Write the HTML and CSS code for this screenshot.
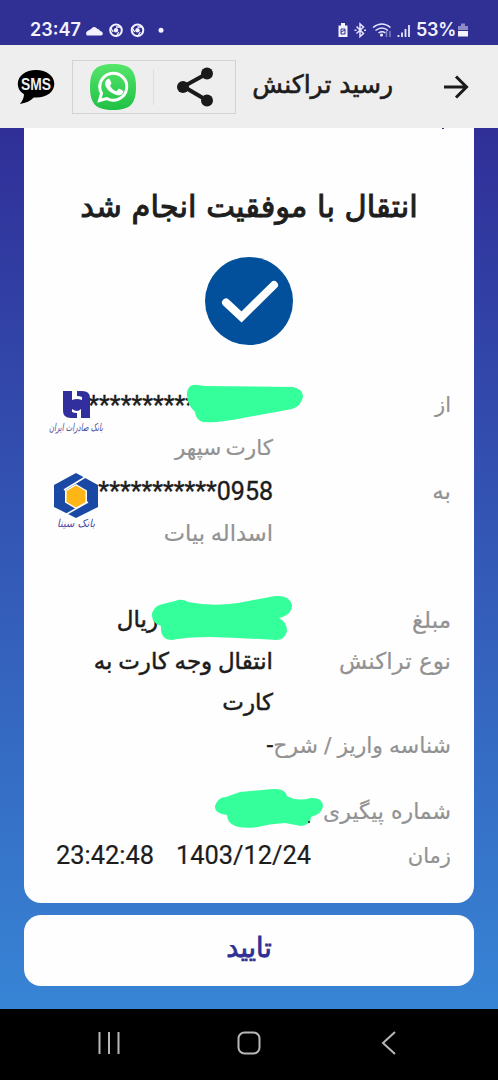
FILE: index.html
```html
<!DOCTYPE html>
<html lang="fa">
<head>
<meta charset="utf-8">
<title>رسید تراکنش</title>
<link rel="stylesheet" href="styles.css">
</head>
<body>
<div class="phone">
  <div class="status">
    <span class="clock">23:47</span>
    <svg class="status-left" width="82" height="18" viewBox="0 0 82 18">
      <path class="fill" d="M2 14.500a2.800 2.800 0 0 1 .5-4.500Q4.500 9 6 8q3-4 6.500 0 2 .2 2.500 2 2 .3 2.500 1.500 1 2-1 3z"/>
      <g class="chrome"><circle cx="31" cy="9.300" r="5.800"/><circle class="fill" cx="31" cy="9.300" r="2.200"/><path d="M31 6h5.500M28.200 11l-3-5M33.800 11l-3 5"/></g>
      <g class="chrome"><circle cx="52.500" cy="9.300" r="5.800"/><circle class="fill" cx="52.500" cy="9.300" r="2.200"/><path d="M52.500 6H58M49.700 11l-3-5M55.300 11l-3 5"/></g>
      <circle class="fill" cx="76" cy="9.300" r="2.500"/>
    </svg>
    <svg class="status-right" width="76" height="18" viewBox="0 0 76 18">
      <path class="fill" d="M1.500 4.500h2.500V2h4v2.500h2.500V16h-9z"/><path class="cut" d="M4 8h4v5H4zM4 11l4-2"/>
      <path class="line" d="M19.500 5.500l7 7-3.500 3V3l3.500 3-7 6.500M17.500 9.200h2M27 9.200h2"/>
      <path class="line" d="M36 6.500q9-7 17.500 0M38.500 9.500q6.500-5 12.500 0M41.500 12q3.500-2.500 7 0"/><circle class="fill" cx="44.500" cy="14" r="1.500"/><path class="dim" d="M49.500 10v6M53 16v-6"/>
      <path class="bars" d="M61.500 14v2M65 11.500V16M68.500 8v8M72 4v12"/>
    </svg>
    <span class="percent">53%</span>
    <svg class="battery" width="12" height="18" viewBox="0 0 12 18"><path class="battery-empty" d="M1 9V5h3V2.500h4V5h3v4z"/><path class="fill" d="M1 10h10v5.500H1z"/></svg>
  </div>

  <header class="bar">
    <svg class="sms" width="38" height="36" viewBox="0 0 38 36"><path d="M19 1C8.500 1 .8 6.800.8 14.800c0 4.700 2.500 8.200 6.200 10.400 0 4-1.800 7-4.200 9.800 6-1 11-3 14-6.500C28.500 29.500 37.300 23.500 37.300 14.800 37.300 6.800 29.500 1 19 1z"/><text x="19" y="20.500" textLength="30" lengthAdjust="spacingAndGlyphs">SMS</text></svg>
    <div class="share-box">
      <svg width="46" height="46" viewBox="0 0 46 46">
        <defs><linearGradient id="wa" x2="0" y2="1"><stop stop-color="#55e66b"/><stop offset="1" stop-color="#20c044"/></linearGradient></defs>
        <path fill="url(#wa)" d="M23 0C40 0 46 6 46 23S40 46 23 46 0 40 0 23 6 0 23 0z"/>
        <path class="wa-ring" d="M9.500 36.500l2-7.200a13.500 13.500 0 1 1 5.200 5.200z"/>
        <path fill="#fff" d="M17 15.500c1-1 2.500-1 3 .2l1.300 3c.3.800-.1 1.500-1.300 2.800 1.500 3 3.500 4.800 6.500 5.800l1.700-2c.5-.6 1-.6 1.600-.3l2.900 1.400c.8.400.7 1 .4 2-1 2.500-4 3.500-6.500 2.600-6-1.800-9.500-5.300-11.200-9.500-.9-2.500-.1-4.500 1.600-6z"/>
      </svg>
      <i class="divider"></i>
      <svg class="share" width="38" height="40" viewBox="0 0 38 40"><path d="M32 6L7.500 19.500 32 34"/><circle cx="31" cy="6.500" r="6"/><circle cx="7" cy="20" r="6"/><circle cx="31" cy="33.500" r="6"/></svg>
    </div>
    <h1 class="bar-title" dir="rtl">رسید تراکنش</h1>
    <svg class="arrow" width="26" height="26" viewBox="0 0 26 26"><path d="M1 13h22M13 2.500L23.500 13 13 23.500"/></svg>
  </header>

  <main class="page">
    <section class="receipt" dir="rtl">
      <i class="scrolled-mark"></i>
      <h2 class="headline">انتقال با موفقیت انجام شد</h2>
      <svg class="done" width="88" height="88" viewBox="0 0 88 88"><circle cx="44" cy="44" r="44"/><path d="M21 45.500L36.500 60 69 28"/></svg>

      <div class="rows">
        <div class="row"><span class="label short">از</span><span class="value card masked" dir="ltr">**********</span>
          <svg class="logo saderat" width="58" height="50" viewBox="0 0 58 50"><rect x="15" y="1" width="28" height="28" fill="#fff"/><path fill="#302f9d" d="M16 2h9v9q3-1 5-1t5 1V8q-2-1-5-1V2h5q8 0 8 7v20h-9v-9q-2 2-4 2t-5-2v3q2 1 5 1v5h-6q-8 0-8-7z"/><text x="29" y="42" direction="rtl" textLength="54" lengthAdjust="spacingAndGlyphs">بانک صادرات ایران</text></svg>
          <svg class="scribble scribble-card" width="120" height="40" viewBox="0 0 120 40"><path d="M2 9Q4 0 13 2L20 3 108 4Q118 6 118 14 116 23 107 26L58 35Q35 40 18 39 11 37 10 29 1 21 2 9z"/></svg>
        </div>
        <div class="row"><span class="label"></span><span class="value muted card-name">کارت سپهر</span></div>
        <div class="row"><span class="label">به</span><span class="value card" dir="ltr">***********0958</span>
          <svg class="logo sina" width="50" height="60" viewBox="0 0 50 60"><path fill="#1949a5" d="M24 1l22 12v22L24 46 2 35V13z"/><path class="sina-lines" d="M12 18L35 4M13 43l23-13"/><path fill="#fff" d="M24 12l11 6.500v12L24 37l-11-6.500v-12z"/><path fill="#feb616" d="M24 13.500l9.500 5.500v11L24 35.500 14.500 30V19z"/><text x="24" y="55" direction="rtl" textLength="38" lengthAdjust="spacingAndGlyphs">بانک سینا</text></svg>
        </div>
        <div class="row"><span class="label"></span><span class="value muted holder">اسداله بیات</span></div>
        <div class="row amount"><span class="label">مبلغ</span><span class="value currency">ریال</span>
          <svg class="scribble scribble-amount" width="146" height="46" viewBox="0 0 146 46"><path d="M2 18Q5 10 13 9L25 6Q32 3 38 7 63 12 88 8L125 1Q140 0 142 10 142 20 129 23 137 27 137 36 135 45 126 45 90 43 60 42 35 42 22 45 10 45 11 31 1 28 2 18z"/></svg>
        </div>
        <div class="row kind"><span class="label">نوع تراکنش</span><span class="value kind-text">انتقال وجه کارت به کارت</span></div>
        <div class="row note"><span class="label note-label">شناسه واریز / شرح</span><span class="value">-</span></div>
        <div class="row tracking"><span class="label tracking-label">شماره پیگیری</span><span class="value"></span>
          <svg class="scribble scribble-tracking" width="112" height="44" viewBox="0 0 112 44"><path d="M2 18Q5 9 13 9L27 4 60 1Q72 0 74 8 84 14 98 10 109 9 110 18 109 26 98 29 98 37 88 38L72 35Q55 36 45 39 15 43 14 27 1 26 2 18z"/><circle class="digit-edge" cx="96" cy="34" r="1.200"/></svg>
        </div>
        <div class="row"><span class="label short">زمان</span><span class="value time" dir="ltr"><span>23:42:48</span><span>1403/12/24</span></span></div>
      </div>
    </section>
    <button class="confirm" dir="rtl">تایید</button>
  </main>

  <nav class="nav">
    <svg width="24" height="24" viewBox="0 0 24 24"><path d="M2.500 1v22M12 1v22M21.500 1v22"/></svg>
    <svg width="24" height="24" viewBox="0 0 24 24"><rect x="1.500" y="1.500" width="21" height="21" rx="6"/></svg>
    <svg width="24" height="24" viewBox="0 0 24 24"><path d="M18 1L6 12l12 11"/></svg>
  </nav>
</div>
</body>
</html>
```
FILE: styles.css
```css
* { box-sizing: border-box; }
body { margin: 0; background: #000; font-family: Roboto, "DejaVu Sans", sans-serif; }
svg { display: block; flex: none; }
.phone { display: flex; flex-direction: column; width: 498px; height: 1080px; overflow: hidden; }

.status { display: flex; align-items: center; height: 45px; padding: 14px 29px 0 30px; background: #302f93; color: #f3f3ff; }
.clock, .percent { font: 600 18px/24px Inter, sans-serif; }
.clock { width: 49px; }
.percent { width: 41px; margin-left: 3px; letter-spacing: -.3px; }
.status-left { margin-left: 6px; }
.status-right { margin-left: auto; }
.status .fill { fill: #f3f3ff; stroke: none; }
.status .cut { fill: none; stroke: #302f93; stroke-width: 1; }
.status .line { fill: none; stroke: #e5e5ff; stroke-width: 1.5; }
.status .bars { fill: none; stroke: #e5e5ff; stroke-width: 1.8; }
.status .dim { fill: none; stroke: #8583c4; stroke-width: 1.5; }
.status .battery-empty { fill: #8e8cc6; }
.chrome { fill: none; stroke: #f3f3ff; stroke-width: 2; }
.chrome path { stroke-width: 1.3; }

.bar { display: flex; align-items: center; height: 83px; padding: 0 29px 0 17px; background: #eee; }
.sms { overflow: visible; }
.sms text { fill: #eee; font: 700 17px "Liberation Sans", sans-serif; text-anchor: middle; }
.share-box { display: flex; align-items: center; width: 164px; height: 54px; margin-left: 17px; padding-left: 17px; border: 1px solid #d3d3d3; }
.wa-ring { fill: none; stroke: #fff; stroke-width: 3; }
.divider { width: 1px; height: 36px; margin: 0 22px 0 17px; background: #dedede; }
.share { fill: #1a1a1a; }
.share path { fill: none; stroke: #1a1a1a; stroke-width: 4; }
.bar-title { margin: 0 0 0 15px; width: 142px; font: 400 25px/40px "DejaVu Sans", sans-serif; color: #1c1c1c; white-space: nowrap; -webkit-text-stroke: .6px; padding-bottom: 3px; }
.arrow { margin-left: auto; fill: none; stroke: #1a1a1a; stroke-width: 3; }

.page { display: flex; flex-direction: column; height: 881px; padding: 0 24px; background: linear-gradient(#302f98, #3784d5); }
.receipt { position: relative; height: 775px; padding: 50px 23px 0; border-radius: 0 0 17px 17px; background: #fefefe; }
.scrolled-mark { position: absolute; top: 0; right: 30px; width: 2px; height: 1px; background: #302f93; }
.headline { height: 58px; margin: 0; font: 400 30.5px/58px "DejaVu Sans", sans-serif; color: #1e1e1e; text-align: center; white-space: nowrap; -webkit-text-stroke: 1px; }
.done { margin: 21px auto 0; fill: #02509b; }
.done path { fill: none; stroke: #fff; stroke-width: 8; stroke-linecap: round; }

.rows { padding-top: 39px; }
.row { position: relative; display: flex; height: 43px; line-height: 42px; font-size: 23px; }
.label { flex: none; width: 178px; color: #929292; white-space: nowrap; font-family: "DejaVu Sans", sans-serif; -webkit-text-stroke: .2px; }
.short { font-size: 21px; }
.note-label { font-size: 22px; word-spacing: -1px; }
.tracking-label { font-size: 22px; }
.value { flex: 1; color: #1c1c1c; white-space: nowrap; -webkit-text-stroke: .5px; }
.muted { color: #929292; -webkit-text-stroke: .2px; }
.card-name { font-size: 21.5px; word-spacing: -1px; }
.holder { font-size: 22.6px; }
.card { font-size: 25px; text-align: right; line-height: 44px; -webkit-text-stroke: .4px; }
.masked { padding-right: 77px; }
.amount { margin-top: 43px; height: 42px; }
.currency { padding-right: 115px; }
.kind { height: 84px; line-height: 41px; }
.kind-text { white-space: normal; }
.note { height: 66px; }
.tracking { height: 44px; }
.time { display: flex; justify-content: space-between; flex: none; width: 255px; margin-right: -38px; font-size: 25.4px; line-height: 41px; -webkit-text-stroke: .2px; }
.logo { position: absolute; font: italic 11px "DejaVu Sans", sans-serif; overflow: visible; }
.logo text { fill: #4a49a4; text-anchor: middle; }
.saderat { left: 0; top: 5px; }
.sina { left: 5px; top: 2px; }
.sina-lines { fill: none; stroke: #fff; stroke-width: 1.5; }
.scribble { position: absolute; fill: #34ff9b; }
.scribble-card { left: 138px; top: -1px; }
.scribble-amount { left: 103px; top: -4px; }
.scribble-tracking { left: 166px; top: -3px; }
.digit-edge { fill: #4a4a4a; }

.confirm { height: 71px; margin-top: 12px; padding: 0 0 6px; border: 0; border-radius: 17px; background: #fefefe; color: #302f93; font: 400 27px "DejaVu Sans", sans-serif; -webkit-text-stroke: .8px; }

.nav { display: flex; justify-content: center; gap: 116px; height: 71px; padding-top: 22px; background: #000; fill: none; stroke: #b8b8b8; stroke-width: 2; }
```
